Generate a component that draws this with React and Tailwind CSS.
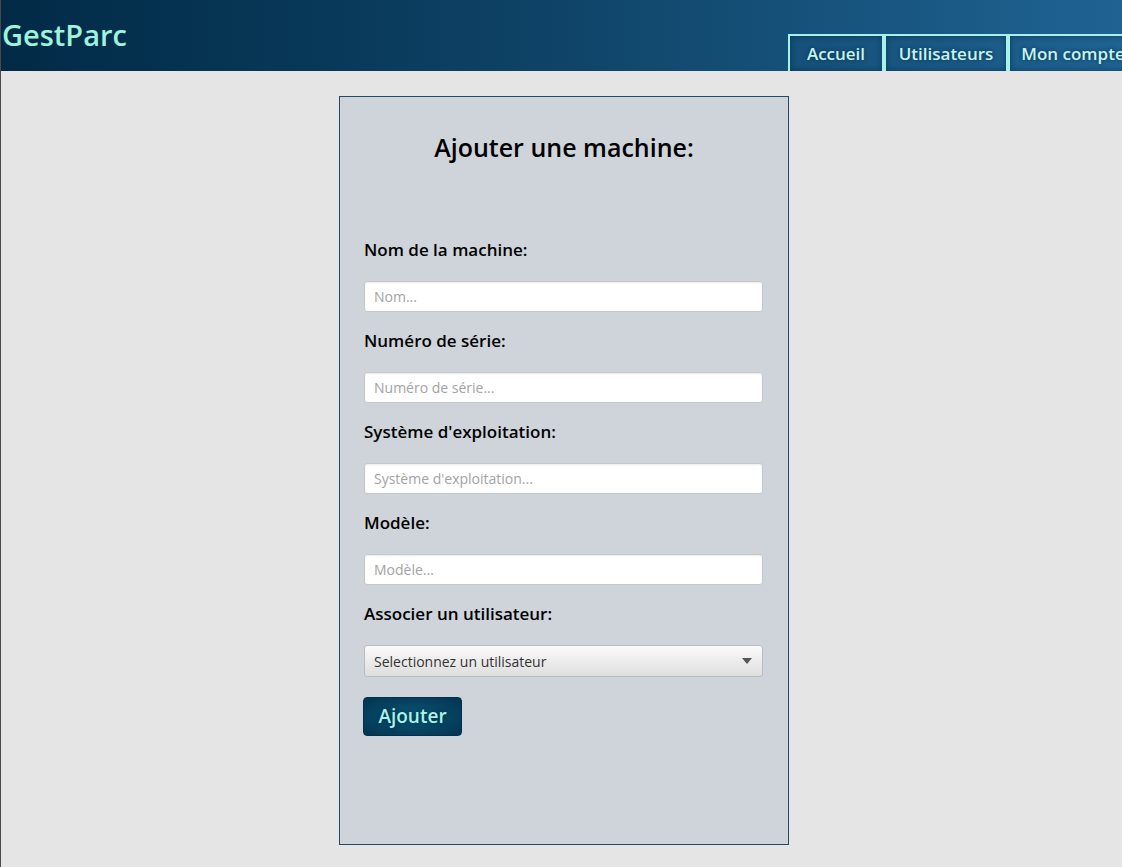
import { useState } from 'react';

const fields = [
  { label: 'Nom de la machine:', placeholder: 'Nom...' },
  { label: 'Numéro de série:', placeholder: 'Numéro de série...' },
  { label: "Système d'exploitation:", placeholder: "Système d'exploitation..." },
  { label: 'Modèle:', placeholder: 'Modèle...' },
];

const tabs = [
  { label: 'Accueil', w: 'w-[96px]' },
  { label: 'Utilisateurs', w: 'w-[124px]' },
  { label: 'Mon compte', w: 'w-[130px]' },
];

export default function App() {
  return (
    <div className="min-h-[867px] w-[1122px] overflow-hidden bg-[#e5e5e5] border-l border-[#4a4a4a] font-['Open_Sans',sans-serif]">
      <Header />
      <main className="pl-[338px] pt-[25px]">
        <MachineForm />
      </main>
    </div>
  );
}

function Header() {
  return (
    <header className="h-[71px] flex bg-gradient-to-r from-[#022a46] via-[#0f4468] to-[#1f6393]">
      <h1 className="pt-[20px] pl-[1px] text-[29px] leading-none font-semibold text-[#9df3de]">GestParc</h1>
      <nav className="ml-auto self-end flex shrink-0 w-[334px]">
        {tabs.map((t) => (
          <a
            key={t.label}
            href="#"
            className={`${t.w} shrink-0 h-[37px] flex items-center justify-center border-2 border-b-0 border-[#a6f1e9] shadow-[inset_0_0_6px_rgba(0,20,40,0.45)] text-[17px] font-semibold text-[#c9f3ee] whitespace-nowrap [text-shadow:0_0_4px_#06304c]`}
          >
            {t.label}
          </a>
        ))}
      </nav>
    </header>
  );
}

function MachineForm() {
  const [values, setValues] = useState({});
  return (
    <div className="w-[450px] h-[749px] border border-[#244a6a] bg-[#cfd4db] px-[24px]">
      <h2 className="pt-[38px] text-center text-[25px] leading-[24px] font-semibold text-black">Ajouter une machine:</h2>
      <form className="pt-[81px]" onSubmit={(e) => e.preventDefault()}>
        {fields.map((f, i) => (
          <div key={f.label} className="pb-[19px]">
            <label className="block text-[17px] leading-[20px] font-semibold text-black">{f.label}</label>
            <input
              className="mt-[21px] block w-[399px] h-[31px] px-[9px] bg-white border border-[#c4c7cc] rounded-[3px] shadow-[inset_0_1px_2px_rgba(0,0,0,0.08)] text-[14px] text-[#333] placeholder:text-[#a3a3a3] outline-none"
              placeholder={f.placeholder}
              value={values[i] || ''}
              onChange={(e) => setValues({ ...values, [i]: e.target.value })}
            />
          </div>
        ))}
        <label className="block text-[17px] leading-[20px] font-semibold text-black">Associer un utilisateur:</label>
        <button
          type="button"
          className="mt-[21px] flex items-center justify-between w-[399px] h-[32px] pl-[9px] pr-[10px] border border-[#b9bcc0] rounded-[3px] bg-gradient-to-b from-[#fbfbfb] to-[#dedede] text-[14px] text-[#333]"
        >
          <span>Selectionnez un utilisateur</span>
          <svg width="10" height="6" viewBox="0 0 10 6">
            <path d="M0 0h10L5 6z" fill="#555" />
          </svg>
        </button>
        <button
          type="submit"
          className="mt-[20px] -ml-[1px] w-[99px] h-[39px] rounded-[4px] border border-[#03304a] bg-[radial-gradient(ellipse_at_center,#0b5877_0%,#06415f_60%,#033450_100%)] text-[19px] font-semibold text-[#a9f4ea] [text-shadow:0_0_4px_#02263c]"
        >
          Ajouter
        </button>
      </form>
    </div>
  );
}
